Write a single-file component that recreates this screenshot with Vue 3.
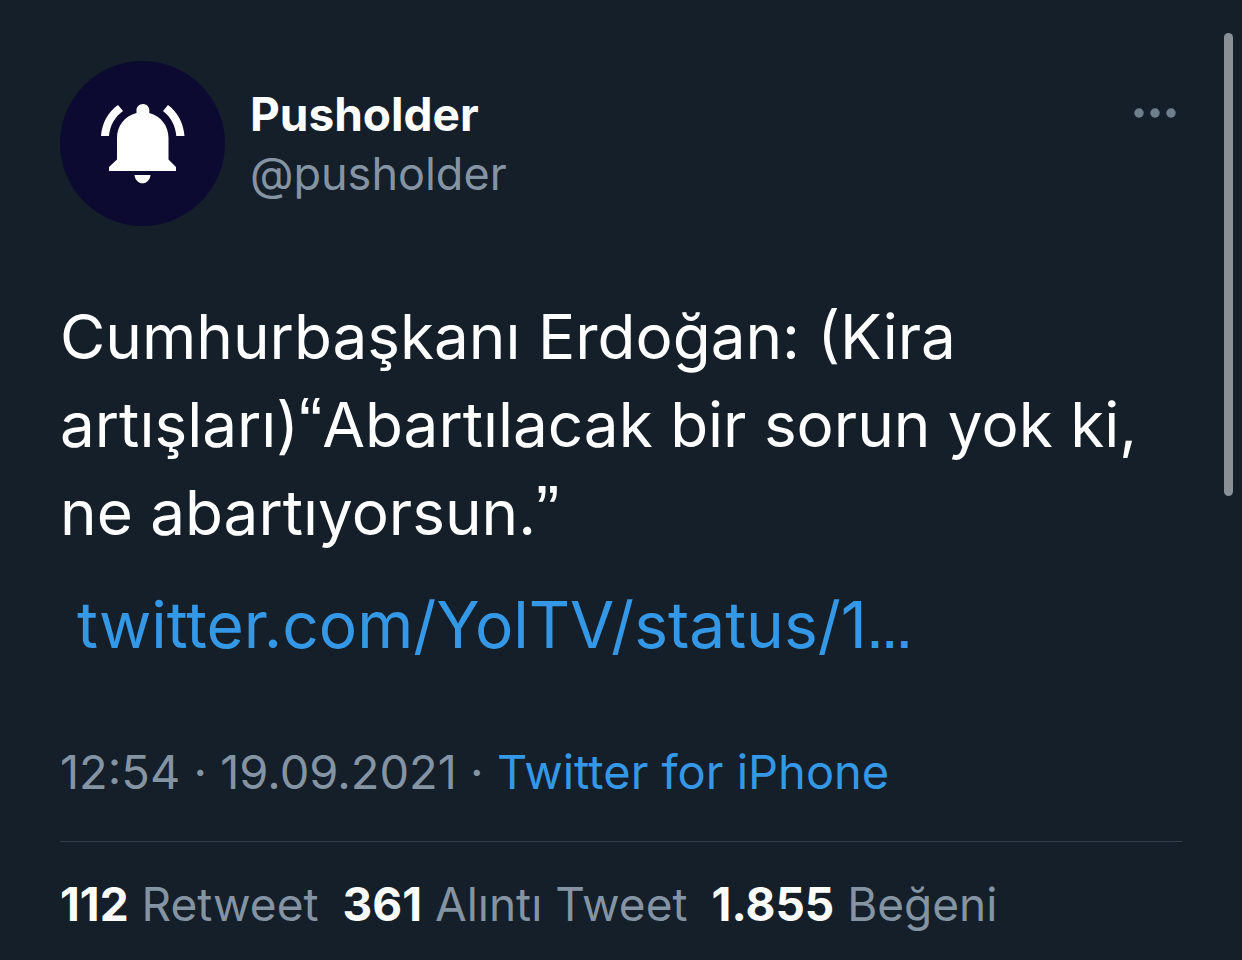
<script setup>
const stats = [
  { count: '112', label: 'Retweet' },
  { count: '361', label: 'Alıntı Tweet' },
  { count: '1.855', label: 'Beğeni' },
]
</script>

<template>
  <main class="page">
    <article class="tweet">
      <header class="head">
        <svg class="avatar" viewBox="0 0 166 166" aria-hidden="true">
          <circle cx="82.5" cy="83.5" r="82.5" fill="#0c0a31" />
          <g fill="#fff">
            <path d="M83 44c3.600 0 6.300 2.800 6.300 6v3C101 56 108.500 66 108.500 78v21.500l7.500 7.500V111H49v-4l8-7.500V78c0-12 7.500-22 19.500-25v-3c0-3.200 2.900-6 6.500-6z" />
            <path d="M74.500 115h16c-.5 5-4 8.300-8 8.300s-7.500-3.300-8-8.300z" />
            <path d="M41 76C42 63 48 52 58 45l5 6c-8.500 6-13.200 15-14 25z" />
            <path d="M124.500 76c-1-13-7-24-16.500-31l-5 6c8 6 12.500 15 13.300 25z" />
          </g>
        </svg>
        <div class="names">
          <a class="name" href="#">Pusholder</a>
          <a class="handle" href="#">@pusholder</a>
        </div>
        <button class="more" type="button" aria-label="More">
          <svg viewBox="0 0 42 12" aria-hidden="true"><circle cx="5" cy="6" r="4.700" /><circle cx="21" cy="6" r="4.700" /><circle cx="37" cy="6" r="4.700" /></svg>
        </button>
      </header>
      <p class="body">Cumhurbaşkanı Erdoğan: (Kira<br>artışları)<span class="quote">“</span>Abartılacak bir sorun yok ki,<br>ne abartıyorsun.<span class="quote">”</span></p>
      <a class="link" href="#">twitter.com/YolTV/status/1<span class="dots">…</span></a>
      <p class="meta"><span>12:54 · 19.09.2021 · </span><a href="#">Twitter for iPhone</a></p>
      <footer class="stats">
        <a v-for="s in stats" :key="s.label" href="#"><b>{{ s.count }}</b> {{ s.label }}</a>
      </footer>
    </article>
    <div class="scrollbar"></div>
  </main>
</template>

<style>
body { margin: 0; background: #151f2a; }
</style>

<style scoped>
.page { position: relative; min-height: 100vh; box-sizing: border-box; background: #151f2a; font-family: Inter, "Noto Sans", sans-serif; color: #fff; }
.tweet { padding: 60px 60px 24px; }
a { color: inherit; text-decoration: none; }
.head { display: flex; align-items: flex-start; }
.avatar { width: 166px; height: 166px; flex: none; }
.names { display: flex; flex-direction: column; flex: 1; padding: 24px 0 0 24px; line-height: 60px; }
.name { font-size: 46px; font-weight: 700; }
.handle { font-size: 45px; color: #8494a3; }
.more { border: 0; background: none; padding: 0; margin: 47px 6px 0 0; }
.more svg { display: block; width: 42px; height: 12px; fill: #6f7f8d; }
.body { margin: 67px 0 0; font-size: 62px; line-height: 88px; font-weight: 400; }
.quote { font-family: "Liberation Sans", sans-serif; font-size: 70px; line-height: 1; }
.dots { font-family: "Liberation Sans", sans-serif; font-size: 46px; font-weight: 700; line-height: 1; }
.link { display: block; margin: 24px 0 0 17px; font-size: 64px; line-height: 88px; font-weight: 400; color: #3498e6; }
.meta { margin: 73px 0 0; font-size: 47px; line-height: 60px; color: #8494a3; white-space: pre-wrap; }
.meta a { color: #3498e6; }
.stats { display: flex; flex-wrap: wrap; gap: 24px; margin-top: 39px; padding-top: 32px; border-top: 1px solid #33404c; font-size: 46px; line-height: 60px; color: #8494a3; }
.stats b { color: #fff; }
.scrollbar { position: absolute; top: 33px; right: 9px; width: 9px; height: 463px; border-radius: 5px; background: #8a9096; }
</style>
